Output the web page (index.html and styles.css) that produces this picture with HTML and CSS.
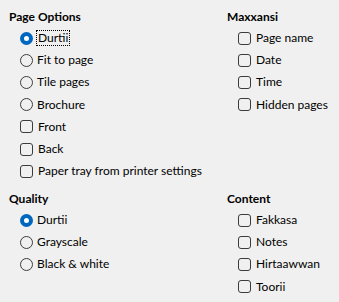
FILE: index.html
```html
<!DOCTYPE html>
<html>
<head>
<meta charset="utf-8">
<link rel="stylesheet" href="styles.css">
</head>
<body>
<div class="panel">
  <section class="group">
    <h3 class="heading">Page Options</h3>
    <label class="opt"><span class="radio checked"></span><span class="label focus">Durtii</span></label>
    <label class="opt"><span class="radio"></span><span class="label">Fit to page</span></label>
    <label class="opt"><span class="radio"></span><span class="label">Tile pages</span></label>
    <label class="opt"><span class="radio"></span><span class="label">Brochure</span></label>
    <label class="opt"><span class="check"></span><span class="label">Front</span></label>
    <label class="opt"><span class="check"></span><span class="label">Back</span></label>
    <label class="opt"><span class="check"></span><span class="label">Paper tray from printer settings</span></label>
  </section>
  <section class="group">
    <h3 class="heading">Maxxansi</h3>
    <label class="opt"><span class="check"></span><span class="label">Page name</span></label>
    <label class="opt"><span class="check"></span><span class="label">Date</span></label>
    <label class="opt"><span class="check"></span><span class="label">Time</span></label>
    <label class="opt"><span class="check"></span><span class="label">Hidden pages</span></label>
  </section>
  <section class="group">
    <h3 class="heading">Quality</h3>
    <label class="opt"><span class="radio checked"></span><span class="label">Durtii</span></label>
    <label class="opt"><span class="radio"></span><span class="label">Grayscale</span></label>
    <label class="opt"><span class="radio"></span><span class="label">Black &amp; white</span></label>
  </section>
  <section class="group">
    <h3 class="heading">Content</h3>
    <label class="opt"><span class="check"></span><span class="label">Fakkasa</span></label>
    <label class="opt"><span class="check"></span><span class="label">Notes</span></label>
    <label class="opt"><span class="check"></span><span class="label">Hirtaawwan</span></label>
    <label class="opt"><span class="check"></span><span class="label">Toorii</span></label>
  </section>
</div>
</body>
</html>
```
FILE: styles.css
```css
html, body {
  margin: 0;
  padding: 0;
  background: #f0f0f0;
}
body {
  font-family: "Lato", "Noto Sans", sans-serif;
  font-size: 12px;
  color: #000;
}
.panel {
  display: grid;
  grid-template-columns: 218px 1fr;
  row-gap: 8.7px;
  padding: 9px 0 0 9px;
}
.group {
  display: flex;
  flex-direction: column;
}
.heading {
  margin: 0 0 2px 0;
  font-size: 12px;
  font-weight: bold;
  line-height: 16px;
  height: 16px;
}
.opt {
  display: flex;
  align-items: center;
  height: 22.2px;
  padding-left: 11px;
}
.radio {
  box-sizing: border-box;
  width: 13px;
  height: 13px;
  border: 1px solid #3c3c3c;
  border-radius: 50%;
  margin-right: 4px;
  flex: none;
}
.radio.checked {
  border: 4.5px solid #0067c0;
  background: #fff;
}
.check {
  box-sizing: border-box;
  width: 13px;
  height: 13px;
  border: 1px solid #3c3c3c;
  border-radius: 3px;
  margin-right: 5px;
  flex: none;
}
.label {
  line-height: 14px;
  white-space: nowrap;
}
.focus {
  outline: 1px dotted #000;
  outline-offset: 0;
  padding: 0 1px;
}
```
